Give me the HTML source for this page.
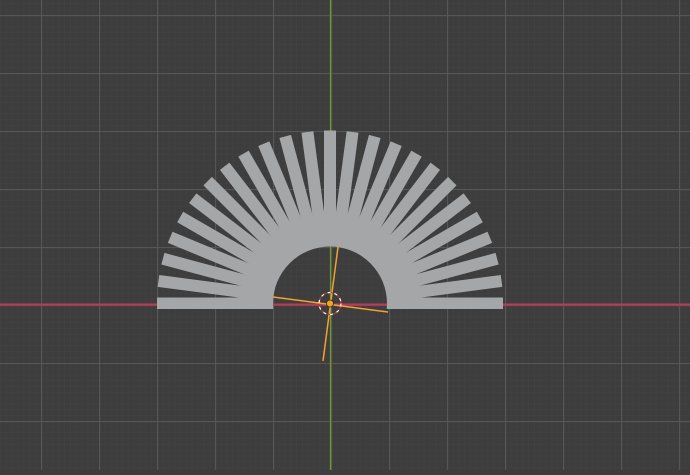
<!DOCTYPE html>
<html><head><style>html,body{margin:0;padding:0;background:#3d3d3d;overflow:hidden}</style></head>
<body>
<svg width="690" height="470" viewBox="0 0 690 470" xmlns="http://www.w3.org/2000/svg">
<defs>
<pattern id="minor" x="41" y="15" width="5.8" height="5.8" patternUnits="userSpaceOnUse">
<path d="M0 0V5.8M0 0H5.8" stroke="#424242" stroke-width="1"/>
</pattern>
<pattern id="major" x="41" y="15" width="58" height="58" patternUnits="userSpaceOnUse">
<path d="M0.5 0V58M0 0.5H58" stroke="#565656" stroke-width="1.3"/>
</pattern>
<mask id="m">
<rect width="690" height="470" fill="black"/>
<g fill="white">
<path d="M240 309 L240 303.5 A86 86 0 0 1 420 303.5 L420 309 Z"/>
<g id="teeth"></g>
</g>
<circle cx="330" cy="303.5" r="57" fill="black"/>
<rect x="0" y="309" width="690" height="200" fill="black"/>
</mask>
</defs>
<rect width="690" height="470" fill="#3d3d3d"/>
<rect width="690" height="470" fill="url(#minor)"/>
<rect width="690" height="470" fill="url(#major)"/>
<line x1="0" y1="304.5" x2="690" y2="304.5" stroke="#c2365a" stroke-width="2"/>
<line x1="330.5" y1="0" x2="330.5" y2="470" stroke="#6f9a25" stroke-width="1.3"/>
<g mask="url(#m)">
<rect width="690" height="470" fill="#a4a6a8"/>
</g>
<line x1="273" y1="297" x2="388" y2="312" stroke="#f2a232" stroke-width="1.5"/>
<line x1="338" y1="247" x2="323" y2="361" stroke="#f2a232" stroke-width="1.5"/>
<circle cx="330" cy="303.5" r="11" fill="none" stroke="#fff" stroke-width="1.2" stroke-dasharray="4 3"/>
<circle cx="330" cy="303.5" r="11" fill="none" stroke="#d03030" stroke-width="1.2" stroke-dasharray="3 4" stroke-dashoffset="4"/>
<circle cx="330" cy="303.5" r="3.5" fill="#f2a232" stroke="#3a2a10" stroke-width="0.8"/>
</svg>
<script>
var g=document.getElementById('teeth'),s='';
for(var i=0;i<=24;i++){var a=i*7.5;s+='<rect x="-6" y="-173" width="12" height="120" transform="translate(330 303.5) rotate('+(a-90)+')"/>';}
g.innerHTML=s;
</script>
</body></html>
